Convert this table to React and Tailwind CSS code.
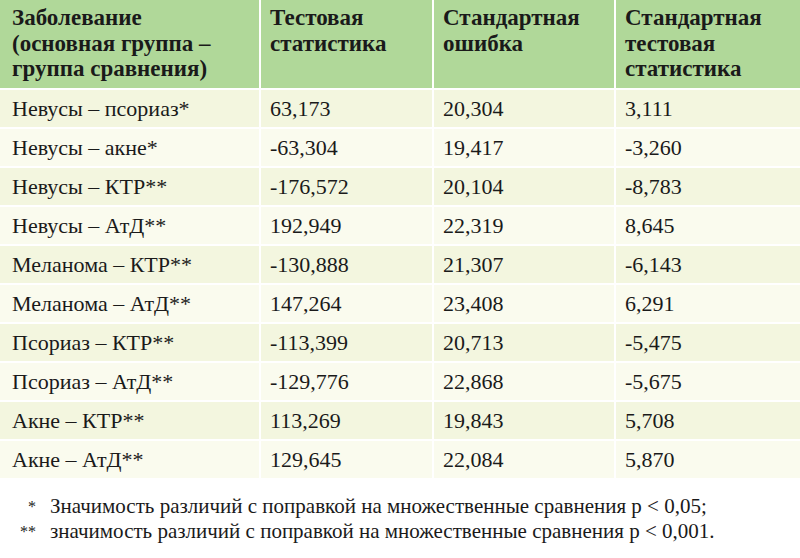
import React from 'react';

const rows = [
  ['Невусы – псориаз*', '63,173', '20,304', '3,111'],
  ['Невусы – акне*', '-63,304', '19,417', '-3,260'],
  ['Невусы – КТР**', '-176,572', '20,104', '-8,783'],
  ['Невусы – АтД**', '192,949', '22,319', '8,645'],
  ['Меланома – КТР**', '-130,888', '21,307', '-6,143'],
  ['Меланома – АтД**', '147,264', '23,408', '6,291'],
  ['Псориаз – КТР**', '-113,399', '20,713', '-5,475'],
  ['Псориаз – АтД**', '-129,776', '22,868', '-5,675'],
  ['Акне – КТР**', '113,269', '19,843', '5,708'],
  ['Акне – АтД**', '129,645', '22,084', '5,870'],
];

const headers = [
  ['Заболевание', '(основная группа –', 'группа сравнения)'],
  ['Тестовая', 'статистика'],
  ['Стандартная', 'ошибка'],
  ['Стандартная', 'тестовая', 'статистика'],
];

export default function App() {
  return (
    <div className="font-serif">
      <div className="w-[800px] h-[558px] bg-white text-[#1a1a1a] [font-family:'Liberation_Serif'] overflow-hidden">
        {/* Table */}
        <div className="grid grid-cols-[259px_171px_180px_1fr] gap-[2px] bg-white">
          {headers.map((h, i) => (
            <div
              key={i}
              className={`h-[88px] bg-[#b0d899] pt-[5px] ${i === 0 ? 'pl-[12px]' : 'pl-[9px]'} text-[23px] font-bold leading-[25.5px] whitespace-nowrap`}
            >
              {h.map((line) => (
                <div key={line}>{line}</div>
              ))}
            </div>
          ))}
          {rows.map((r, ri) =>
            r.map((c, ci) => (
              <div
                key={`${ri}-${ci}`}
                className={`h-[37px] flex items-center text-[22px] ${ri % 2 === 0 ? 'bg-[#f3f6df]' : 'bg-[#fafbee]'} ${ci === 0 ? 'pl-[12px]' : 'pl-[9px]'}`}
              >
                {c}
              </div>
            ))
          )}
        </div>

        {/* Footnotes */}
        <div className="mt-[16px] text-[21px] leading-[25px]">
          <div className="flex">
            <span className="w-[50px] text-right pr-[14px] text-[16px]">*</span>
            <span>Значимость различий с поправкой на множественные сравнения p &lt; 0,05;</span>
          </div>
          <div className="flex">
            <span className="w-[50px] text-right pr-[14px] text-[16px]">**</span>
            <span>значимость различий с поправкой на множественные сравнения p &lt; 0,001.</span>
          </div>
        </div>
      </div>
    </div>
  );
}
